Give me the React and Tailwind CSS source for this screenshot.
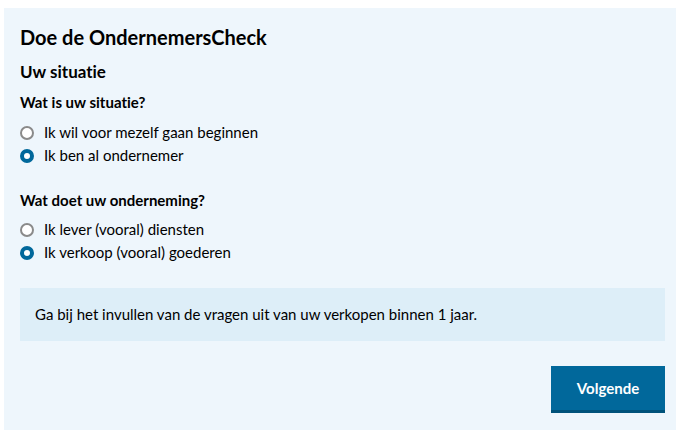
import React, { useState } from 'react';

const Radio = ({ name, label, checked, onChange }) => (
  <label className="flex items-center gap-[10px] h-[23px] cursor-pointer">
    <span
      className={`w-[14px] h-[14px] rounded-full flex items-center justify-center bg-white ${
        checked ? 'border-[4px] border-[#01689b]' : 'border-2 border-[#8a8a8a]'
      }`}
    >
      <input type="radio" name={name} checked={checked} onChange={onChange} className="sr-only" />
    </span>
    <span className="text-[15px] text-black">{label}</span>
  </label>
);

export default function App() {
  const [situatie, setSituatie] = useState('ondernemer');
  const [doet, setDoet] = useState('goederen');

  return (
    <div className="pt-2 pl-1 bg-white font-['Lato',sans-serif] [font-variant-ligatures:none]">
      <div className="bg-[#eef6fc] pl-4 pr-[11px] pt-[16px] pb-[17px] min-h-[422px]">
        <h1 className="text-[20px] font-bold text-black leading-[26px]">Doe de OndernemersCheck</h1>
        <h2 className="mt-[10px] text-[17px] font-bold text-black leading-[24px]">Uw situatie</h2>

        <fieldset className="mt-[7px]">
          <legend className="text-[15px] font-bold text-black leading-[22px]">Wat is uw situatie?</legend>
          <div className="mt-[8px] flex flex-col">
            <Radio
              name="situatie"
              label="Ik wil voor mezelf gaan beginnen"
              checked={situatie === 'beginnen'}
              onChange={() => setSituatie('beginnen')}
            />
            <Radio
              name="situatie"
              label="Ik ben al ondernemer"
              checked={situatie === 'ondernemer'}
              onChange={() => setSituatie('ondernemer')}
            />
          </div>
        </fieldset>

        <fieldset className="mt-[22px]">
          <legend className="text-[15px] font-bold text-black leading-[22px]">Wat doet uw onderneming?</legend>
          <div className="mt-[7px] flex flex-col">
            <Radio
              name="doet"
              label="Ik lever (vooral) diensten"
              checked={doet === 'diensten'}
              onChange={() => setDoet('diensten')}
            />
            <Radio
              name="doet"
              label="Ik verkoop (vooral) goederen"
              checked={doet === 'goederen'}
              onChange={() => setDoet('goederen')}
            />
          </div>
        </fieldset>

        <div className="mt-[24px] bg-[#ddeef8] h-[53px] flex items-center px-[15px] text-[15px] text-black">
          Ga bij het invullen van de vragen uit van uw verkopen binnen 1 jaar.
        </div>

        <div className="mt-[25px] flex justify-end">
          <button className="w-[114px] h-[47px] bg-[#01689b] border-b-[3px] border-[#00527a] text-white font-bold text-[15px]">
            Volgende
          </button>
        </div>
      </div>
    </div>
  );
}
